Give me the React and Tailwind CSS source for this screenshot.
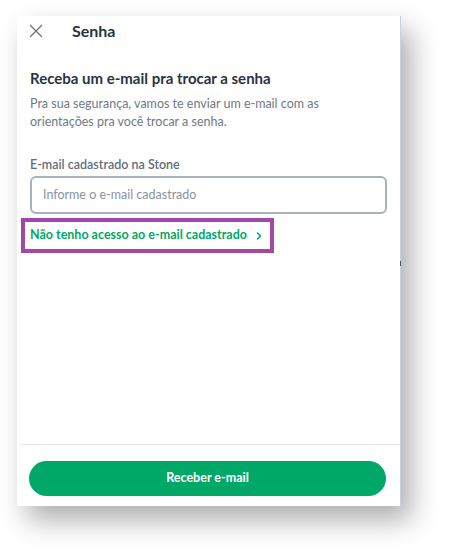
import React from "react";

const font = { fontFamily: "Lato, 'Noto Sans', sans-serif" };

const CloseIcon = () => (
  <svg width="14" height="14" viewBox="0 0 14 14" fill="none">
    <path d="M1.5 1.5 L12.5 12.5 M12.5 1.5 L1.5 12.5" stroke="#6b7480" strokeWidth="1.4" strokeLinecap="round" />
  </svg>
);

const Chevron = () => (
  <svg width="8" height="10" viewBox="0 0 8 10" fill="none">
    <path d="M2.5 2 L5.5 5 L2.5 8" stroke="#00a868" strokeWidth="1.6" strokeLinecap="round" strokeLinejoin="round" />
  </svg>
);

export default function App() {
  return (
    <div className="w-[449px] h-[554px] bg-white pt-[16px] pl-[17px] overflow-hidden" style={font}>
      <div className="relative w-[384px] h-[490px] bg-white flex flex-col border-r border-[#c9d1dc] shadow-[10px_14px_26px_rgba(0,0,0,0.32)]">
        <span className="absolute right-[-1px] top-[245px] w-px h-[5px] bg-[#555]" />

        <div className="flex items-center h-[30px] pl-[12px]">
          <CloseIcon />
          <span className="ml-[29px] text-[16px] font-bold text-[#2b3340]">Senha</span>
        </div>

        <div className="px-[13px] pt-[22px] flex-1">
          <h1 className="text-[15px] font-bold text-[#2b3340] leading-[20px]">Receba um e-mail pra trocar a senha</h1>
          <p className="mt-[7px] text-[12.5px] leading-[18px] text-[#6f7987]">
            Pra sua segurança, vamos te enviar um e-mail com as
            <br />
            orientações pra você trocar a senha.
          </p>

          <label className="block mt-[25px] text-[12.5px] font-semibold text-[#626d7a] leading-[18px]">
            E-mail cadastrado na Stone
          </label>
          <div className="mt-[2px] h-[38px] w-[357px] rounded-[6px] border-2 border-[#a9b1bc] flex items-center px-[11px]">
            <span className="text-[12.5px] text-[#8a939f]">Informe o e-mail cadastrado</span>
          </div>

          <div className="mt-[4px] -ml-[9px] w-[253px] h-[35px] border-[4px] border-[#a04aa3] flex items-center pl-[5px] gap-[8px]">
            <span className="text-[12.5px] font-bold text-[#00a868]">Não tenho acesso ao e-mail cadastrado</span>
            <Chevron />
          </div>
        </div>

        <div className="border-t border-[#e6e9ee] ml-[3px] px-[9px] pt-[16px] pb-[10px]">
          <button className="w-[357px] h-[35px] rounded-full bg-[#00a868] text-white text-[12.5px] font-bold">
            Receber e-mail
          </button>
        </div>
      </div>
    </div>
  );
}
